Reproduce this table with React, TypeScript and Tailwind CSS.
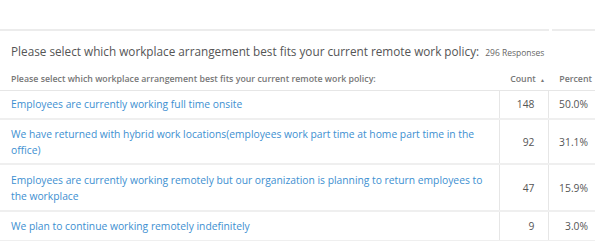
const rows = [
  { label: "Employees are currently working full time onsite", count: 148, pct: "50.0%", h: "h-[29px]" },
  {
    label:
      "We have returned with hybrid work locations(employees work part time at home part time in the office)",
    count: 92,
    pct: "31.1%",
    h: "h-[45px]",
  },
  {
    label:
      "Employees are currently working remotely but our organization is planning to return employees to the workplace",
    count: 47,
    pct: "15.9%",
    h: "h-[47px]",
  },
  { label: "We plan to continue working remotely indefinitely", count: 9, pct: "3.0%", h: "h-[30px]" },
];

export default function App() {
  return (
    <div className="h-[241px] w-[600px] overflow-hidden bg-white font-['Open_Sans',sans-serif]">
      <div className="w-[595px] pt-[29px]">
        <div className="flex gap-[3px]">
          <div className="h-[2px] flex-1 bg-[#ececec]" />
          <div className="h-[2px] w-[43px] bg-[#ececec]" />
        </div>

        <div className="flex items-baseline whitespace-nowrap px-[11px] pt-[11px]">
          <h2 className="text-[11.75px] leading-[18px] text-[#555]">
            Please select which workplace arrangement best fits your current remote work policy:
          </h2>
          <span className="ml-[6px] text-[8.5px] text-[#666]">296 Responses</span>
        </div>

        <table className="mt-[9px] w-full border-collapse">
          <thead>
            <tr className="h-[21px] border-b border-[#e6e6e6] text-[8.8px] text-[#777]">
              <th className="pl-[11px] text-left font-semibold">
                Please select which workplace arrangement best fits your current remote work policy:
              </th>
              <th className="w-[49px] whitespace-nowrap pr-[3px] text-right font-semibold">
                Count <span className="ml-[2px] text-[5px]">▲</span>
              </th>
              <th className="w-[47px] pr-[3px] text-right font-semibold">Percent</th>
            </tr>
          </thead>
          <tbody className="text-[10.3px] leading-[16px]">
            {rows.map((r) => (
              <tr key={r.label} className={`${r.h} border-b-2 border-[#efefef]`}>
                <td className="pl-[11px] pr-[8px] text-[#3d8fd1]">{r.label}</td>
                <td className="border-x border-[#e6e6e6] pr-[13px] text-right text-[#555]">{r.count}</td>
                <td className="pr-[7px] text-right text-[#555]">{r.pct}</td>
              </tr>
            ))}
          </tbody>
        </table>
      </div>
    </div>
  );
}
